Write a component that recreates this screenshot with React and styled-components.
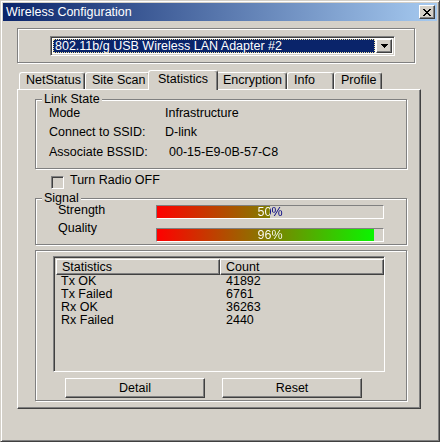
import React from "react";
import styled, { createGlobalStyle } from "styled-components";

const face = "#d4d0c8";
const shadow = "#808080";
const dark = "#404040";

const GlobalStyle = createGlobalStyle`
  html, body { margin: 0; padding: 0; background: ${face}; }
  body {
    font-family: "Liberation Sans", Arial, sans-serif;
    font-size: 12.5px;
    color: #000;
  }
  * { box-sizing: border-box; }
`;

const Window = styled.div`
  width: 440px;
  height: 442px;
  background: ${face};
  border: 1px solid;
  border-color: ${face} ${dark} ${dark} ${face};
  box-shadow: inset 1px 1px 0 #fff, inset -1px -1px 0 ${shadow};
  padding: 2px;
  display: flex;
  flex-direction: column;
`;

const TitleBar = styled.div`
  height: 18px;
  background: linear-gradient(to right, #0a246a, #a6caf0);
  display: flex;
  align-items: center;
  justify-content: space-between;
  padding: 0 2px 0 3px;
  color: #fff;
`;

const TitleText = styled.span`
  line-height: 18px;
  font-size: 12.5px;
`;

const Raised = styled.div`
  background: ${face};
  border: 1px solid;
  border-color: #fff ${dark} ${dark} #fff;
  box-shadow: inset -1px -1px 0 ${shadow};
`;

const CloseButton = styled(Raised)`
  width: 16px;
  height: 14px;
  display: flex;
  align-items: center;
  justify-content: center;
  padding-right: 1px;
`;

const Body = styled.div`
  padding: 7px 0 0 14px;
  display: flex;
  flex-direction: column;
`;

const etched = `
  border: 1px solid ${shadow};
  box-shadow: 1px 1px 0 #fff, inset 1px 1px 0 #fff;
`;

const ComboGroup = styled.div`
  ${etched}
  width: 398px;
  height: 35px;
  padding: 7px 0 0 32px;
`;

const Combo = styled.div`
  width: 345px;
  height: 20px;
  border: 1px solid;
  border-color: ${shadow} #fff #fff ${shadow};
  box-shadow: inset 1px 1px 0 ${dark}, inset -1px -1px 0 ${face};
  background: #fff;
  padding: 2px;
  display: flex;
`;

const ComboValue = styled.div`
  flex: 1;
  background: #0a246a;
  color: #fff;
  outline: 1px dotted #f0e0a0;
  outline-offset: -1px;
  line-height: 14px;
  padding-left: 2px;
  margin-right: 1px;
  white-space: nowrap;
  overflow: hidden;
`;

const ComboButton = styled(Raised)`
  width: 16px;
  display: flex;
  align-items: center;
  justify-content: center;
`;

const TabStrip = styled.div`
  margin-top: 7px;
  height: 20px;
  width: 404px;
  padding-left: 2px;
  display: flex;
  align-items: flex-end;
  position: relative;
  z-index: 1;
`;

const Tab = styled.div`
  width: ${({ $w }) => $w}px;
  height: ${({ $active }) => ($active ? 20 : 17)}px;
  margin: ${({ $active }) => ($active ? "0 -2px 0 -2px" : "0 0 1px 0")};
  padding-left: ${({ $active }) => ($active ? 9 : 6)}px;
  background: ${face};
  border-top: 1px solid #fff;
  border-left: 1px solid #fff;
  border-right: 1px solid ${dark};
  border-radius: 3px 3px 0 0;
  box-shadow: inset -1px 0 0 ${shadow};
  line-height: ${({ $active }) => ($active ? 16 : 15)}px;
  white-space: nowrap;
  position: relative;
  z-index: ${({ $active }) => ($active ? 2 : 0)};
`;

const Panel = styled.div`
  margin-top: -1px;
  width: 404px;
  height: 320px;
  border: 1px solid;
  border-color: #fff ${dark} ${dark} #fff;
  box-shadow: inset -1px -1px 0 ${shadow};
  padding: 9px 0 0 17px;
  display: flex;
  flex-direction: column;
`;

const Group = styled.div`
  ${etched}
  position: relative;
  width: 372px;
  height: ${({ $h }) => $h}px;
  margin-top: ${({ $mt }) => $mt || 0}px;
`;

const Legend = styled.span`
  position: absolute;
  top: -8px;
  left: 6px;
  padding: 0 2px;
  background: ${face};
  line-height: 14px;
`;

const InfoList = styled.div`
  padding: 3px 0 0 13px;
  display: grid;
  grid-template-columns: 116px 1fr;
  grid-auto-rows: 19.5px;
  align-items: center;
`;

const InfoValue = styled.span`
  padding-left: ${({ $indent }) => $indent || 0}px;
`;

const CheckRow = styled.label`
  margin-top: 7px;
  padding-left: 16px;
  height: 13px;
  display: flex;
  align-items: flex-start;
  gap: 6px;
`;

const CheckBox = styled.span`
  width: 13px;
  height: 13px;
  border: 1px solid;
  border-color: ${shadow} #fff #fff ${shadow};
  box-shadow: inset 1px 1px 0 ${dark}, inset -1px -1px 0 ${face};
  background: ${face};
`;

const CheckText = styled.span`
  line-height: 13px;
  margin-top: -2px;
`;

const SignalGrid = styled.div`
  padding: 6px 0 0 22px;
  display: grid;
  grid-template-columns: 98px 228px;
  row-gap: 9px;
`;

const SignalLabel = styled.span`
  line-height: 14px;
  margin-top: -${({ $lift }) => $lift}px;
  align-self: start;
`;

const Bar = styled.div`
  height: 14px;
  border: 1px solid;
  border-color: ${shadow} #fff #fff ${shadow};
  background-color: ${face};
  background-repeat: no-repeat;
  display: flex;
  justify-content: center;
`;

const BarText = styled.span`
  width: 100%;
  text-align: center;
  line-height: 12px;
  color: transparent;
  -webkit-background-clip: text;
  background-clip: text;
  background-repeat: no-repeat;
`;

const StatsBody = styled.div`
  padding: 5px 0 0 17px;
  display: flex;
  flex-direction: column;
`;

const ListView = styled.div`
  width: 332px;
  height: 116px;
  border: 1px solid;
  border-color: ${shadow} #fff #fff ${shadow};
  box-shadow: inset 1px 1px 0 ${dark}, inset -1px -1px 0 ${face};
  padding: 2px 0 0 2px;
`;

const HeaderRow = styled.div`
  display: flex;
  height: 16px;
`;

const HeaderCell = styled(Raised)`
  width: 164px;
  padding-left: 5px;
  line-height: 14px;
`;

const StatRow = styled.div`
  display: grid;
  grid-template-columns: 164px 1fr;
  line-height: 13px;
  padding-left: 5px;
  &:first-of-type { margin-top: 1px; }
`;

const CountCell = styled.span`
  padding-left: 1px;
`;

const ButtonRow = styled.div`
  margin-top: 6px;
  padding-left: 12px;
  display: flex;
  gap: 17px;
`;

const PushButton = styled(Raised).attrs({ as: "button" })`
  width: 140px;
  height: 20px;
  font: inherit;
  color: #000;
  padding: 0;
`;

function CloseGlyph() {
  return (
    <svg width="8" height="7" viewBox="0 0 8 7" shapeRendering="crispEdges">
      <path
        d="M0 0h2v1h-2zM6 0h2v1h-2zM1 1h2v1h-2zM5 1h2v1h-2zM2 2h4v1h-4zM3 3h2v1h-2zM2 4h4v1h-4zM1 5h2v1h-2zM5 5h2v1h-2zM0 6h2v1h-2zM6 6h2v1h-2z"
        fill="#000"
      />
    </svg>
  );
}

function DownArrow() {
  return (
    <svg width="7" height="4" viewBox="0 0 7 4" shapeRendering="crispEdges">
      <path d="M0 0h7v1h-7zM1 1h5v1h-5zM2 2h3v1h-3zM3 3h1v1h-1z" fill="#000" />
    </svg>
  );
}

function SignalBar({ value }) {
  const fill = Math.round((226 * value) / 100);
  return (
    <Bar
      style={{
        backgroundImage: `linear-gradient(to right, transparent ${fill}px, ${face} ${fill}px), linear-gradient(to right, #ff0000, #00ff00)`,
      }}
    >
      <BarText
        style={{
          backgroundImage: `linear-gradient(to right, #fff ${fill}px, #000080 ${fill}px)`,
        }}
      >
        {value}%
      </BarText>
    </Bar>
  );
}

const tabs = [
  { name: "NetStatus", w: 66 },
  { name: "Site Scan", w: 65 },
  { name: "Statistics", w: 70 },
  { name: "Encryption", w: 71 },
  { name: "Info", w: 47 },
  { name: "Profile", w: 48 },
];

const stats = [
  ["Tx OK", "41892"],
  ["Tx Failed", "6761"],
  ["Rx OK", "36263"],
  ["Rx Failed", "2440"],
];

export default function App() {
  return (
    <>
      <GlobalStyle />
      <Window>
        <TitleBar>
          <TitleText>Wireless Configuration</TitleText>
          <CloseButton>
            <CloseGlyph />
          </CloseButton>
        </TitleBar>
        <Body>
          <ComboGroup>
            <Combo>
              <ComboValue>802.11b/g USB Wireless LAN Adapter #2</ComboValue>
              <ComboButton>
                <DownArrow />
              </ComboButton>
            </Combo>
          </ComboGroup>

          <TabStrip>
            {tabs.map((t) => (
              <Tab key={t.name} $w={t.w} $active={t.name === "Statistics"}>
                {t.name}
              </Tab>
            ))}
          </TabStrip>

          <Panel>
            <Group $h={70}>
              <Legend>Link State</Legend>
              <InfoList>
                <span>Mode</span>
                <InfoValue>Infrastructure</InfoValue>
                <span>Connect to SSID:</span>
                <InfoValue>D-link</InfoValue>
                <span>Associate BSSID:</span>
                <InfoValue $indent={4}>00-15-E9-0B-57-C8</InfoValue>
              </InfoList>
            </Group>

            <CheckRow>
              <CheckBox />
              <CheckText>Turn Radio OFF</CheckText>
            </CheckRow>

            <Group $h={47} $mt={9}>
              <Legend>Signal</Legend>
              <SignalGrid>
                <SignalLabel $lift={2}>Strength</SignalLabel>
                <SignalBar value={50} />
                <SignalLabel $lift={7}>Quality</SignalLabel>
                <SignalBar value={96} />
              </SignalGrid>
            </Group>

            <Group $h={151} $mt={5}>
              <StatsBody>
                <ListView>
                  <HeaderRow>
                    <HeaderCell>Statistics</HeaderCell>
                    <HeaderCell>Count</HeaderCell>
                  </HeaderRow>
                  {stats.map(([name, count]) => (
                    <StatRow key={name}>
                      <span>{name}</span>
                      <CountCell>{count}</CountCell>
                    </StatRow>
                  ))}
                </ListView>
                <ButtonRow>
                  <PushButton>Detail</PushButton>
                  <PushButton>Reset</PushButton>
                </ButtonRow>
              </StatsBody>
            </Group>
          </Panel>
        </Body>
      </Window>
    </>
  );
}
